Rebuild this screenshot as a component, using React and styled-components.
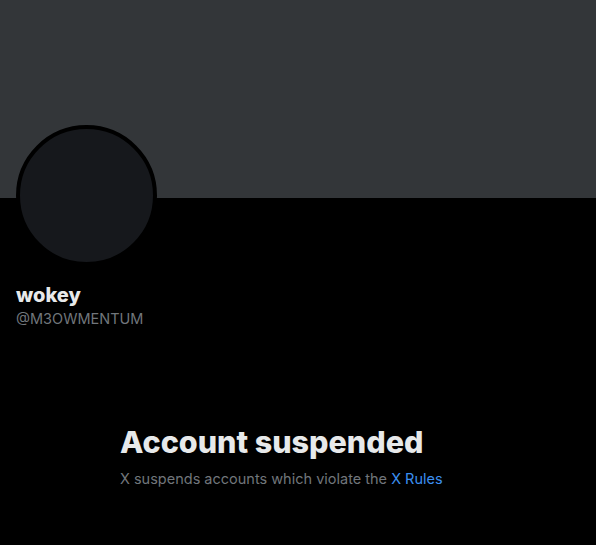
import React from 'react';
import styled, { createGlobalStyle } from 'styled-components';

const GlobalStyle = createGlobalStyle`
  html, body {
    margin: 0;
    padding: 0;
    background: #000;
  }
  body {
    font-family: Inter, Roboto, "Liberation Sans", sans-serif;
    color: #e7e9ea;
  }
`;

const Page = styled.div`
  width: 596px;
  min-height: 545px;
  background: #000;
  overflow: hidden;
`;

const Banner = styled.div`
  height: 198px;
  background: #333639;
`;

const ProfileHead = styled.div`
  padding: 0 16px;
`;

const Avatar = styled.div`
  width: 133px;
  height: 133px;
  margin-top: -73px;
  border: 4px solid #000;
  border-radius: 50%;
  background: #16181c;
`;

const Names = styled.div`
  margin-top: 17px;
  display: flex;
  flex-direction: column;
  gap: 2px;
`;

const DisplayName = styled.div`
  font-size: 20px;
  line-height: 24px;
  font-weight: 800;
  color: #e7e9ea;
`;

const Handle = styled.div`
  font-size: 14.5px;
  line-height: 20px;
  color: #71767b;
`;

const EmptyState = styled.div`
  max-width: 356px;
  margin: 95px auto 0;
`;

const Title = styled.div`
  font-size: 30.5px;
  line-height: 36px;
  font-weight: 800;
  color: #e7e9ea;
`;

const Subtitle = styled.div`
  margin-top: 9px;
  font-size: 14.5px;
  line-height: 20px;
  color: #71767b;
`;

const RulesLink = styled.a`
  color: #3b8ff0;
  text-decoration: none;
`;

export default function App() {
  return (
    <Page>
      <GlobalStyle />
      <Banner />
      <ProfileHead>
        <Avatar />
        <Names>
          <DisplayName>wokey</DisplayName>
          <Handle>@M3OWMENTUM</Handle>
        </Names>
      </ProfileHead>
      <EmptyState>
        <Title>Account suspended</Title>
        <Subtitle>
          X suspends accounts which violate the <RulesLink href="#">X Rules</RulesLink>
        </Subtitle>
      </EmptyState>
    </Page>
  );
}
